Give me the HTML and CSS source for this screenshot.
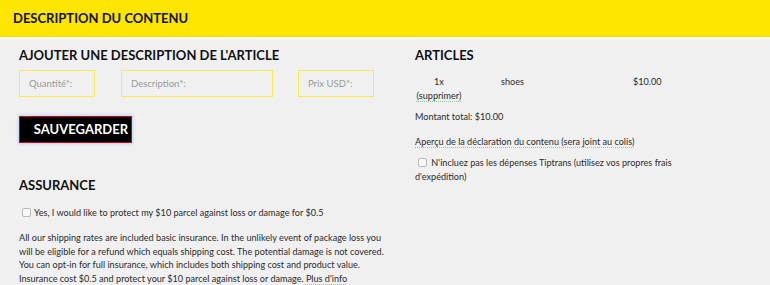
FILE: index.html
```html
<!DOCTYPE html>
<html lang="fr">
<head>
    <meta charset="UTF-8">
    <title>Description du contenu</title>
    <link rel="stylesheet" href="styles.css">
</head>
<body>

<div class="cd_header">
    <h2>Description du contenu</h2>
</div>

<div class="cd_layout">
    <div class="cd_left">
        <h3>Ajouter une description de l'article</h3>
        <!--formulaire article-->
        <form class="cd_form" action="#" method="post">
            <div class="cd_inputs">
                <input type="text" class="in_qty" placeholder="Quantité*:">
                <input type="text" class="in_desc" placeholder="Description*:">
                <input type="text" class="in_price" placeholder="Prix USD*:">
            </div>
            <button type="button" class="btn_save">Sauvegarder</button>
        </form>

        <h3 class="title_ins">Assurance</h3>
        <label class="check_row check_ins"><input type="checkbox"><span>Yes, I would like to protect my $10 parcel against loss or damage for $0.5</span></label>
        <p class="ins_text">All our shipping rates are included basic insurance. In the unlikely event of package loss you will be eligible for a refund which equals shipping cost. The potential damage is not covered. You can opt-in for full insurance, which includes both shipping cost and product value. Insurance cost $0.5 and protect your $10 parcel against loss or damage. <a href="#">Plus d'info</a></p>
    </div>

    <div class="cd_right">
        <h3>Articles</h3>
        <div class="art_row">
            <div class="art_qty">1x <a href="#">(supprimer)</a></div>
            <div class="art_name">shoes</div>
            <div class="art_price">$10.00</div>
        </div>
        <p class="total">Montant total: $10.00</p>
        <p class="preview"><a href="#">Aperçu de la déclaration du contenu (sera joint au colis)</a></p>
        <label class="check_row check_own"><input type="checkbox"> N'incluez pas les dépenses Tiptrans (utilisez vos propres frais d'expédition)</label>
    </div>
</div>

</body>
</html>
```

FILE: styles.css
```css
*{
    margin: 0px;
    padding: 0px;
    box-sizing: border-box;
}
body{
    background-color: #f0f0f0;
    font-family: Lato, "Open Sans", sans-serif;
    font-size: 9.1px;
    color: #2b2b2b;
}

.cd_header{
    background-color: #ffe600;
    height: 39px;
    border-bottom: 2px solid white;
    padding: 10px 13px 0;
}
.cd_header h2{
    font-size: 13px;
    font-weight: 700;
    text-transform: uppercase;
    color: #111111;
    line-height: 16px;
}

.cd_layout{
    display: grid;
    grid-template-columns: 387px 1fr;
}

h3{
    font-size: 13px;
    font-weight: 700;
    text-transform: uppercase;
    color: #111111;
    line-height: 16px;
}

.cd_left{
    padding: 8px 0 0 19px;
}
.cd_right{
    padding: 8px 80px 0 28px;
}

/*champs du formulaire*/
.cd_inputs{
    display: flex;
    margin-top: 7px;
}
.cd_inputs input{
    height: 27px;
    border: 1px solid #ffe94d;
    background-color: transparent;
    padding-left: 9px;
    font-family: Lato, sans-serif;
    font-size: 9.5px;
    outline: none;
}
.cd_inputs input::placeholder{
    color: #9a9a9a;
}
.in_qty{
    width: 76px;
}
.in_desc{
    width: 152px;
    margin-left: 26px;
}
.in_price{
    width: 76px;
    margin-left: 25px;
}

.btn_save{
    display: block;
    margin-top: 19px;
    width: 113px;
    height: 27px;
    background-color: black;
    color: white;
    border: 1px solid #c8001e;
    box-shadow: 0 0 3px 1px #bfcff0;
    font-family: Lato, sans-serif;
    font-size: 13px;
    font-weight: 700;
    text-transform: uppercase;
    text-align: right;
    padding-right: 3px;
    line-height: 25px;
}

.title_ins{
    margin-top: 34px;
}

/*cases a cocher*/
.check_row{
    display: block;
    line-height: 14px;
}
.check_row input{
    appearance: none;
    display: inline-block;
    width: 9px;
    height: 9px;
    border: 1px solid #b9b9b9;
    border-radius: 2px;
    background-color: #f8f8f8;
    vertical-align: -1px;
}
.check_ins{
    margin-top: 13px;
}
.check_ins input{
    margin: 0 3px 0 3px;
}

.ins_text{
    margin-top: 11px;
    line-height: 13.5px;
}

a{
    color: #2b2b2b;
    text-decoration: underline dotted #86cf96;
    text-underline-offset: 2px;
}

/*liste des articles*/
.art_row{
    display: grid;
    grid-template-columns: 48px 170px 1fr;
    margin-top: 12px;
    line-height: 14px;
}
.art_qty{
    text-align: center;
}
.art_name{
    padding-left: 38px;
}

.total{
    margin-top: 7px;
    line-height: 14px;
}
.preview{
    margin-top: 11px;
    line-height: 14px;
}
.check_own{
    margin-top: 7px;
}
.check_own input{
    margin: 0 2px 0 3px;
}
```
